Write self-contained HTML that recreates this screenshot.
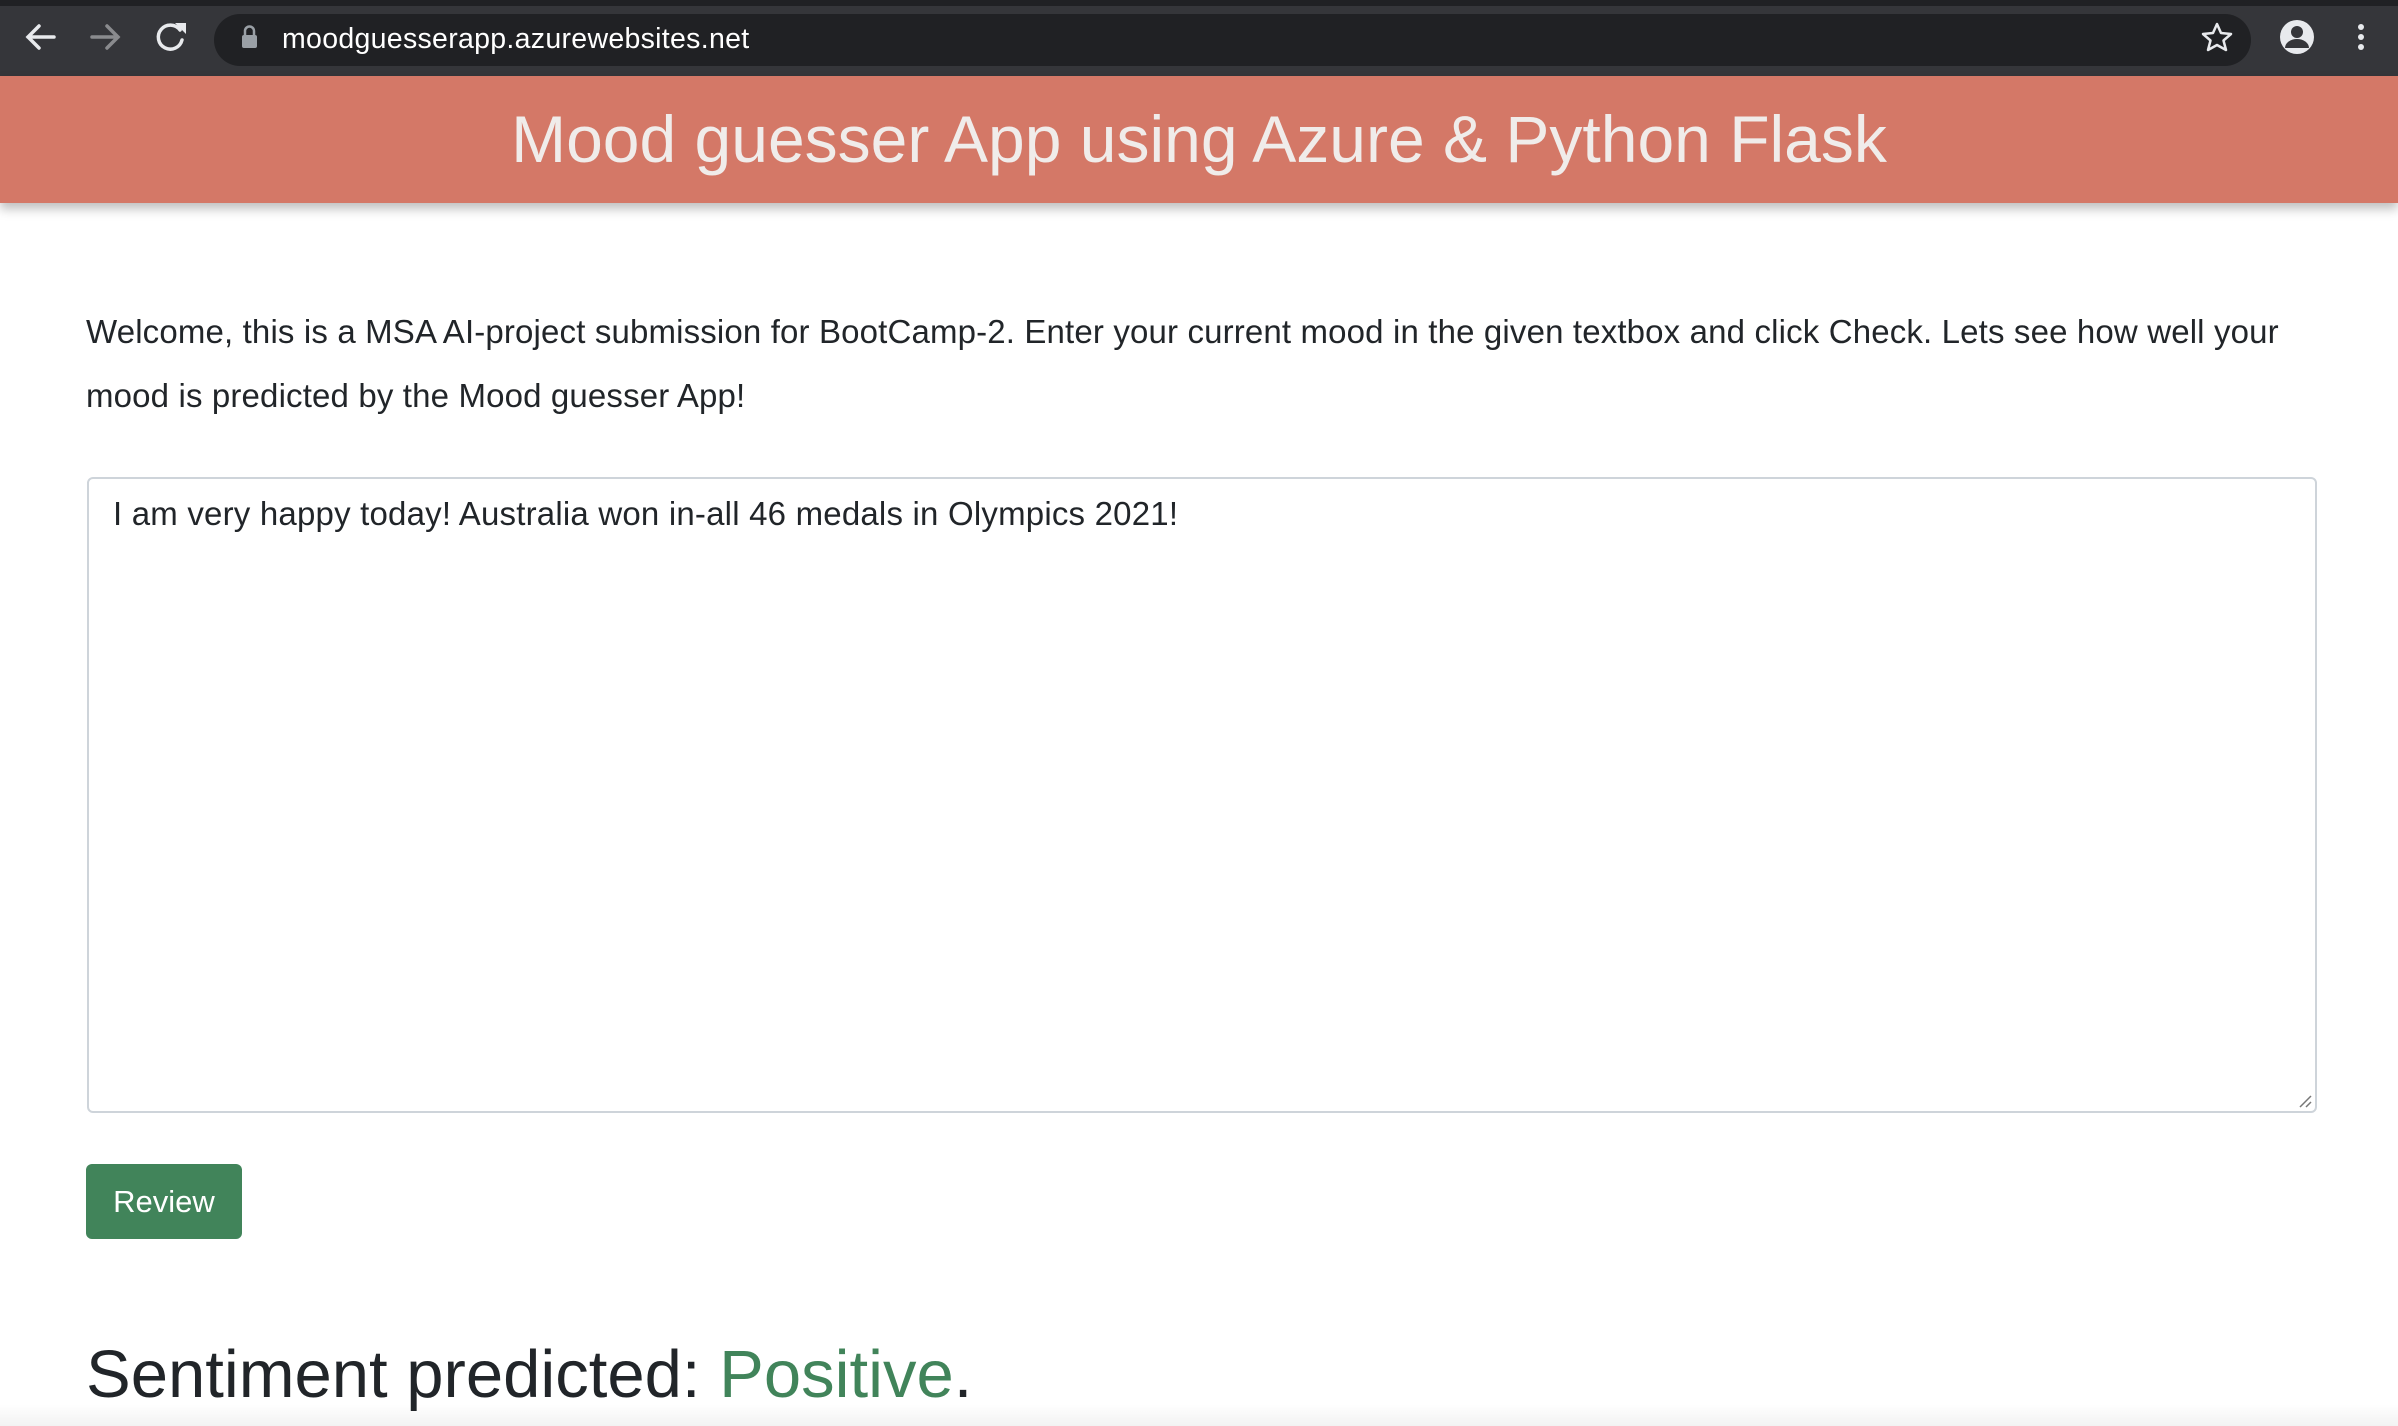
<!DOCTYPE html>
<html><head><meta charset="utf-8"><style>
*{margin:0;padding:0;box-sizing:border-box}
body{width:2398px;height:1426px;overflow:hidden;background:#fff;font-family:"Liberation Sans",sans-serif;position:relative}
#chrome{position:absolute;left:0;top:0;width:2398px;height:76px;background:#35363a;border-top:6px solid #202124}
#addr{position:absolute;left:214px;top:8px;width:2037px;height:52px;border-radius:26px;background:#202124}
#icons{position:absolute;left:0;top:-6px;z-index:2}
#url{position:absolute;left:282px;top:17px;color:#fff;font-size:28.5px;letter-spacing:0.3px;z-index:2}
#hdr{position:absolute;left:0;top:76px;width:2398px;height:127px;background:#d47867;box-shadow:0 6px 10px rgba(0,0,0,.25);text-align:center;color:#f0ecea;font-size:66px;line-height:127px}
#p{position:absolute;left:86px;top:300px;width:2250px;font-size:33px;letter-spacing:0.15px;line-height:64px;color:#212529}
#ta{position:absolute;left:87px;top:477px;width:2230px;height:636px;border:2px solid #ced4da;border-radius:6px;padding:16px 24px;font-size:33px;letter-spacing:0.2px;color:#212529}
#btn{position:absolute;left:86px;top:1164px;width:156px;height:75px;background:#41845a;border-radius:6px;color:#fff;font-size:31px;line-height:75px;text-align:center}
#sent{position:absolute;left:86px;top:1332px;font-size:67px;color:#212529;line-height:86px;z-index:2}
#sent span{color:#41845a}
#fade{position:absolute;left:0;top:1404px;width:2398px;height:22px;background:linear-gradient(rgba(0,0,0,0),rgba(0,0,0,.05));z-index:3}
</style></head><body>
<div id="chrome">
<div id="addr"></div>
<svg id="icons" width="2398" height="76">
<g stroke="#e8eaed" stroke-width="3.5" fill="none" stroke-linecap="round">
<path d="M54 37H28M39 26L28 37L39 48"/>
<path d="M92 37H118M107 26L118 37L107 48" stroke="#8a8b8e"/>
<path d="M180 30A12 12 0 1 0 182 40"/>
</g>
<path d="M175 23L186 23L186 34Z" fill="#e8eaed"/>
<rect x="242" y="35" width="15" height="13" rx="2" fill="#9aa0a6"/>
<path d="M245 35V31A4.5 4.5 0 0 1 254 31V35" stroke="#9aa0a6" stroke-width="2.5" fill="none"/>
<path d="M2217 24L2221 33L2231 34L2223.5 40.5L2226 50L2217 45L2208 50L2210.5 40.5L2203 34L2213 33Z" stroke="#e8eaed" stroke-width="2.5" fill="none" stroke-linejoin="round"/>
<circle cx="2297" cy="37" r="17" fill="#e8eaed"/>
<circle cx="2297" cy="32" r="6" fill="#35363a"/>
<path d="M2285 48A12 9 0 0 1 2309 48Z" fill="#35363a"/>
<circle cx="2361" cy="27" r="3" fill="#e8eaed"/><circle cx="2361" cy="37" r="3" fill="#e8eaed"/><circle cx="2361" cy="47" r="3" fill="#e8eaed"/>
</svg>
<div id="url">moodguesserapp.azurewebsites.net</div>
</div>
<div id="hdr">Mood guesser App using Azure &amp; Python Flask</div>
<div id="p">Welcome, this is a MSA AI-project submission for BootCamp-2. Enter your current mood in the given textbox and click Check. Lets see how well your mood is predicted by the Mood guesser App!</div>
<div id="ta">I am very happy today! Australia won in-all 46 medals in Olympics 2021!
<svg style="position:absolute;right:2px;bottom:2px" width="16" height="16"><path d="M14 3L3 14M14 9L9 14" stroke="#777" stroke-width="1.5"/></svg></div>
<div id="btn">Review</div>
<div id="sent">Sentiment predicted: <span>Positive</span>.</div>
<div id="fade"></div>
</body></html>
